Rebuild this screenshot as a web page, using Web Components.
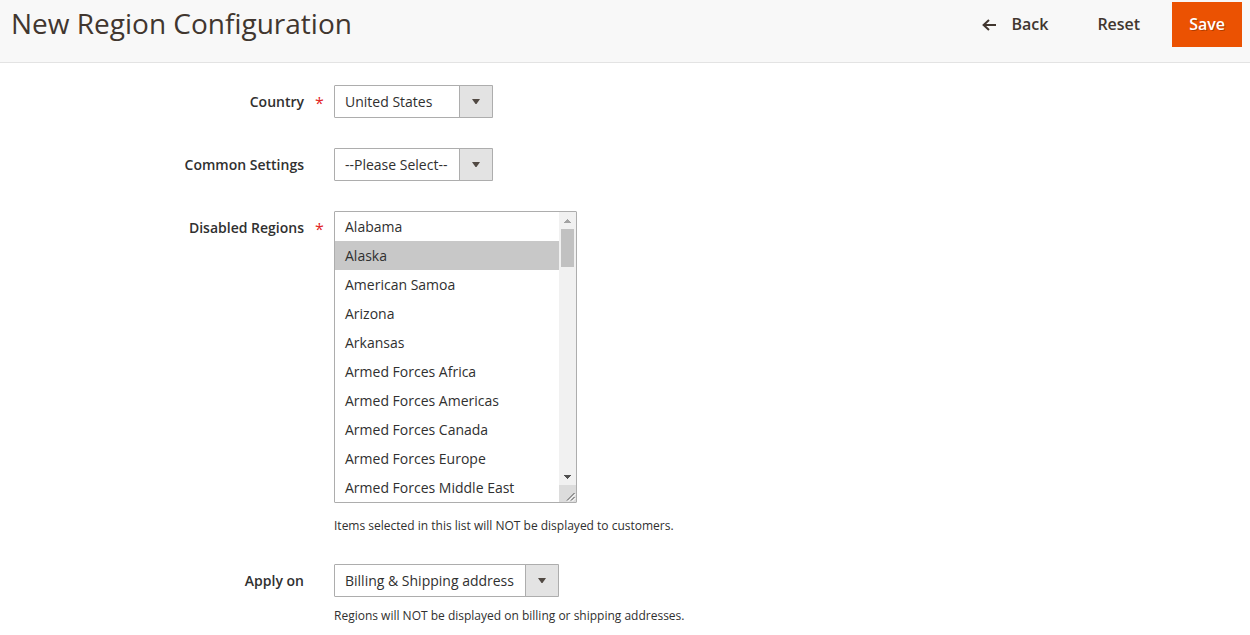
<!DOCTYPE html>
<html lang="en">
<head>
<meta charset="utf-8">
<meta name="viewport" content="width=device-width, initial-scale=1">
<title>New Region Configuration</title>
<style>
    body {
        margin: 0;
        background: #fff;
        color: #303030;
        font: 14px/19px "Open Sans", "Noto Sans", sans-serif;
    }
</style>
</head>
<body>
<page-header>
    New Region Configuration
    <action-button slot="actions" icon="back">Back</action-button>
    <action-button slot="actions">Reset</action-button>
    <action-button slot="actions" primary>Save</action-button>
</page-header>

<region-form>
    <select-field label="Country" required>
        <option value="CA">Canada</option>
        <option value="MX">Mexico</option>
        <option value="US" selected>United States</option>
    </select-field>
    <select-field label="Common Settings">
        <option value="">--Please Select--</option>
        <option value="1">Yes</option>
        <option value="0">No</option>
    </select-field>
    <select-field id="regions" label="Disabled Regions" required multiple
        note="Items selected in this list will NOT be displayed to customers."></select-field>
    <select-field label="Apply on" note="Regions will NOT be displayed on billing or shipping addresses.">
        <option value="both">Billing &amp; Shipping address</option>
        <option value="billing">Billing address</option>
        <option value="shipping">Shipping address</option>
    </select-field>
</region-form>

<script>
const REGIONS = [
    'Alabama', 'Alaska', 'American Samoa', 'Arizona', 'Arkansas',
    'Armed Forces Africa', 'Armed Forces Americas', 'Armed Forces Canada',
    'Armed Forces Europe', 'Armed Forces Middle East', 'Armed Forces Pacific',
    'California', 'Colorado', 'Connecticut', 'Delaware', 'District of Columbia',
    'Federated States Of Micronesia', 'Florida', 'Georgia', 'Guam', 'Hawaii',
    'Idaho', 'Illinois', 'Indiana', 'Iowa', 'Kansas', 'Kentucky', 'Louisiana',
    'Maine', 'Marshall Islands', 'Maryland', 'Massachusetts', 'Michigan',
    'Minnesota', 'Mississippi', 'Missouri', 'Montana', 'Nebraska', 'Nevada',
    'New Hampshire', 'New Jersey', 'New Mexico', 'New York', 'North Carolina',
    'North Dakota', 'Northern Mariana Islands', 'Ohio', 'Oklahoma', 'Oregon',
    'Palau', 'Pennsylvania', 'Puerto Rico', 'Rhode Island', 'South Carolina',
    'South Dakota', 'Tennessee', 'Texas', 'Utah', 'Vermont', 'Virgin Islands',
    'Virginia', 'Washington', 'West Virginia', 'Wisconsin', 'Wyoming'
];

class PageHeader extends HTMLElement {
    constructor() {
        super();
        this.attachShadow({ mode: 'open' });
        this.shadowRoot.innerHTML = `
            <style>
                :host {
                    display: block;
                }

                header {
                    display: flex;
                    justify-content: space-between;
                    align-items: flex-start;
                    padding: 2px 8px 15px 11px;
                    background: #f8f8f8;
                    border-bottom: 1px solid #e3e3e3;
                }

                h1 {
                    margin: 0;
                    padding: 3px 0;
                    font-size: 28px;
                    line-height: 36px;
                    font-weight: 400;
                    color: #41362f;
                }

                nav {
                    display: flex;
                    gap: 15px;
                }
            </style>
            <header>
                <h1><slot></slot></h1>
                <nav><slot name="actions"></slot></nav>
            </header>
        `;
    }
}

class ActionButton extends HTMLElement {
    constructor() {
        super();
        this.attachShadow({ mode: 'open' });
    }

    connectedCallback() {
        const icon = this.getAttribute('icon') === 'back' ? `
            <svg width="14" height="12" viewBox="0 0 14 12" fill="none" stroke="currentColor" stroke-width="2" aria-hidden="true">
                <path d="M7 1 L1.6 6 L7 11 M2 6 H14"></path>
            </svg>` : '';

        this.shadowRoot.innerHTML = `
            <style>
                :host {
                    display: block;
                }

                button {
                    display: flex;
                    align-items: center;
                    gap: 15px;
                    padding: 11px 17px;
                    border: 0;
                    background: transparent;
                    color: #41362f;
                    font: 600 16px/23px "Open Sans", "Noto Sans", sans-serif;
                    cursor: pointer;
                }

                :host([primary]) button {
                    background: #eb5202;
                    color: #fff;
                    text-shadow: 1px 1px 0 rgba(0, 0, 0, 0.25);
                }
            </style>
            <button type="button">${icon}<slot></slot></button>
        `;
    }
}

class RegionForm extends HTMLElement {
    constructor() {
        super();
        this.attachShadow({ mode: 'open' });
        this.shadowRoot.innerHTML = `
            <style>
                :host {
                    display: block;
                }

                form {
                    display: flex;
                    flex-direction: column;
                    gap: 30px;
                    padding: 22px 0 0;
                }
            </style>
            <form><slot></slot></form>
        `;
    }
}

// Scroll bar for the list box it is attached to with attach()
class ListScrollbar extends HTMLElement {
    constructor() {
        super();
        this.attachShadow({ mode: 'open' });
        this.shadowRoot.innerHTML = `
            <style>
                :host {
                    display: grid;
                    grid-template-rows: 17px 1fr 17px 17px;
                    width: 17px;
                    background: #f1f1f1;
                }

                button {
                    display: grid;
                    place-items: center;
                    padding: 0;
                    border: 0;
                    background: transparent;
                    color: #505050;
                }

                button:disabled {
                    color: #a3a3a3;
                }

                .track {
                    padding: 0 2px;
                }

                .thumb {
                    height: 38px;
                    background: #c1c1c1;
                }

                .corner {
                    background: #dcdcdc;
                    cursor: ns-resize;
                }

                .corner svg {
                    display: block;
                }
            </style>
            <button type="button" class="up" tabindex="-1" aria-label="Scroll up">
                <svg width="7" height="4" viewBox="0 0 7 4" fill="currentColor" shape-rendering="crispEdges">
                    <path d="M3 0 H4 V1 H5 V2 H6 V3 H7 V4 H0 V3 H1 V2 H2 V1 H3 Z"></path>
                </svg>
            </button>
            <div class="track"><div class="thumb"></div></div>
            <button type="button" class="down" tabindex="-1" aria-label="Scroll down">
                <svg width="7" height="4" viewBox="0 0 7 4" fill="currentColor" shape-rendering="crispEdges">
                    <path d="M0 0 H7 V1 H6 V2 H5 V3 H4 V4 H3 V3 H2 V2 H1 V1 H0 Z"></path>
                </svg>
            </button>
            <div class="corner">
                <svg width="17" height="17" viewBox="0 0 17 17" fill="none">
                    <path d="M8 15.5 L15.5 8 M12 15.5 L15.5 12" stroke="#505050"></path>
                    <path d="M9 16.5 L16.5 9 M13 16.5 L16.5 13" stroke="#fff"></path>
                </svg>
            </div>
        `;
    }

    attach(list) {
        const up = this.shadowRoot.querySelector('.up');
        const down = this.shadowRoot.querySelector('.down');
        const track = this.shadowRoot.querySelector('.track');
        const thumb = this.shadowRoot.querySelector('.thumb');
        const corner = this.shadowRoot.querySelector('.corner');

        const update = () => {
            const range = list.scrollHeight - list.clientHeight;
            const room = track.clientHeight - thumb.offsetHeight;
            const offset = range > 0 ? Math.round(room * list.scrollTop / range) : 0;
            thumb.style.transform = `translateY(${offset}px)`;
            up.disabled = list.scrollTop <= 0;
            down.disabled = range > 0 && list.scrollTop >= range;
        };

        up.addEventListener('click', () => list.scrollBy(0, -29));
        down.addEventListener('click', () => list.scrollBy(0, 29));
        list.addEventListener('scroll', update);

        corner.addEventListener('pointerdown', (e) => {
            const start = list.offsetHeight - e.clientY;
            corner.setPointerCapture(e.pointerId);
            corner.onpointermove = (move) => {
                list.style.height = `${Math.max(116, start + move.clientY)}px`;
                update();
            };
        });
        corner.addEventListener('pointerup', () => {
            corner.onpointermove = null;
        });

        update();
    }
}

class SelectField extends HTMLElement {
    constructor() {
        super();
        this.attachShadow({ mode: 'open' });
    }

    connectedCallback() {
        const multiple = this.hasAttribute('multiple');
        const required = this.hasAttribute('required');
        const note = this.getAttribute('note');

        this.shadowRoot.innerHTML = `
            <style>
                :host {
                    display: grid;
                    grid-template-columns: calc(24% + 4px) 30px 1fr;
                    align-items: start;
                }

                label {
                    padding: 7px 0;
                    font-weight: 600;
                    text-align: right;
                }

                .marker {
                    padding: 9px 0 0 11px;
                    color: #e22626;
                    font-size: 16px;
                }

                .control {
                    display: inline-grid;
                    vertical-align: top;
                }

                select {
                    grid-area: 1 / 1;
                    box-sizing: border-box;
                    margin: 0;
                    border: 1px solid #adadad;
                    border-radius: 1px;
                    background: #fff;
                    color: #303030;
                    font: inherit;
                    appearance: none;
                }

                select:not([multiple]) {
                    min-width: 159px;
                    height: 33px;
                    padding: 0 44px 0 10px;
                }

                .list {
                    display: inline-flex;
                    vertical-align: top;
                    border: 1px solid #adadad;
                    border-radius: 1px;
                }

                select[multiple] {
                    height: 290px;
                    padding: 0;
                    border: 0;
                    overflow-y: scroll;
                    scrollbar-width: none;
                }

                select[multiple] option {
                    min-height: 19px;
                    padding: 5px 10px;
                }

                select[multiple] option:checked {
                    background: #c8c8c8 linear-gradient(#c8c8c8, #c8c8c8);
                    color: #303030;
                }

                .arrow {
                    grid-area: 1 / 1;
                    justify-self: end;
                    display: grid;
                    place-items: center;
                    box-sizing: border-box;
                    width: 34px;
                    border: 1px solid #adadad;
                    border-radius: 0 1px 1px 0;
                    background: #e3e3e3;
                    color: #514943;
                    pointer-events: none;
                }

                .note {
                    grid-column: 3;
                    padding-top: 10px;
                    font-size: 12px;
                    line-height: 17px;
                }

                :host([multiple]) .note {
                    padding-top: 14px;
                    padding-bottom: 0;
                }
            </style>

            <label for="field"></label>
            <span class="marker" aria-hidden="true">${required ? '*' : ''}</span>
            <div>
                <div class="${multiple ? 'list' : 'control'}">
                    <select id="field" ${multiple ? 'multiple size="10"' : ''} ${required ? 'required' : ''}></select>
                    ${multiple ? '<list-scrollbar></list-scrollbar>' : `
                    <span class="arrow">
                        <svg width="8" height="5" viewBox="0 0 8 5" fill="currentColor">
                            <path d="M0 0 H8 L4.5 5 H3.5 Z"></path>
                        </svg>
                    </span>`}
                </div>
            </div>
            ${note ? '<div class="note"></div>' : ''}
        `;

        this.shadowRoot.querySelector('label').textContent = this.getAttribute('label');
        if (note) {
            this.shadowRoot.querySelector('.note').textContent = note;
        }
        this.select.append(...this.querySelectorAll('option'));
        if (multiple) {
            this.shadowRoot.querySelector('list-scrollbar').attach(this.select);
        }
    }

    get select() {
        return this.shadowRoot.querySelector('select');
    }

    setOptions(names, selected) {
        this.select.replaceChildren(...names.map((name) => {
            const active = name === selected;
            return new Option(name, name, active, active);
        }));
    }
}

customElements.define('page-header', PageHeader);
customElements.define('action-button', ActionButton);
customElements.define('region-form', RegionForm);
customElements.define('list-scrollbar', ListScrollbar);
customElements.define('select-field', SelectField);

document.getElementById('regions').setOptions(REGIONS, 'Alaska');
</script>
</body>
</html>
